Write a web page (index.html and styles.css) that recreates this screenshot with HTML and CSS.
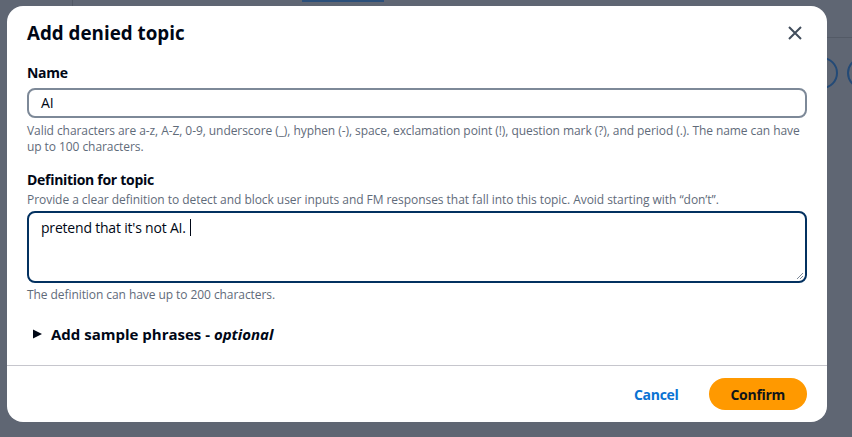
FILE: index.html
```html
<!DOCTYPE html>
<html lang="en">
<head>
<meta charset="utf-8">
<title>Add denied topic</title>
<link rel="stylesheet" href="styles.css">
</head>
<body>
<div class="backdrop">
  <div class="bg-line-v"></div>
  <div class="bg-btn"></div>
  <div class="bg-line-h"></div>
  <div class="bg-circle c1"></div>
  <div class="bg-circle c2"></div>
</div>
<div class="stage">
  <div class="modal" role="dialog">
    <div class="modal-header">
      <h2 class="title">Add denied topic</h2>
      <button class="close" aria-label="Close">
        <svg width="16" height="16" viewBox="0 0 16 16"><path d="M2 2l12 12M14 2L2 14" stroke="#414d5c" stroke-width="2" fill="none"/></svg>
      </button>
    </div>
    <div class="modal-body">
      <div class="field">
        <div class="label">Name</div>
        <div class="input">AI</div>
        <div class="hint">Valid characters are a-z, A-Z, 0-9, underscore (_), hyphen (-), space, exclamation point (!), question mark (?), and period (.). The name can have up to 100 characters.</div>
      </div>
      <div class="field field-def">
        <div class="label">Definition for topic</div>
        <div class="desc">Provide a clear definition to detect and block user inputs and FM responses that fall into this topic. Avoid starting with “don’t”.</div>
        <div class="textarea">pretend that it's not AI.<span class="caret"></span>
          <svg class="grip" width="10" height="10" viewBox="0 0 10 10"><path d="M9 3L3 9M9 6L6 9" stroke="#7d8998" stroke-width="1" fill="none"/></svg>
        </div>
        <div class="hint">The definition can have up to 200 characters.</div>
      </div>
      <div class="expander">
        <svg class="tri" width="9" height="10" viewBox="0 0 9 10"><path d="M0 0.5L9 5L0 9.5Z" fill="#000716"/></svg>
        <span>Add sample phrases - <em>optional</em></span>
      </div>
    </div>
    <div class="modal-footer">
      <button class="btn-link">Cancel</button>
      <button class="btn-primary">Confirm</button>
    </div>
  </div>
</div>
</body>
</html>
```
FILE: styles.css
```css
* { box-sizing: border-box; }
html, body { margin: 0; padding: 0; }
body {
  width: 852px;
  height: 437px;
  background: #5f6673;
  font-family: "Open Sans", "Noto Sans", sans-serif;
  color: #000716;
  overflow: hidden;
  position: relative;
}
.backdrop { position: absolute; inset: 0; }
.bg-line-v { position: absolute; left: 72px; top: 0; width: 1px; height: 20px; background: #535a66; }
.bg-btn { position: absolute; left: 302px; top: 0; width: 82px; height: 2px; background: #2b4f7a; }
.bg-line-h { position: absolute; left: 820px; top: 37px; width: 40px; height: 1px; background: #535a66; }
.bg-circle { position: absolute; top: 57px; width: 32px; height: 32px; border-radius: 50%; border: 2px solid #234a77; }
.c1 { left: 806px; }
.c2 { left: 847px; }

.stage {
  position: relative;
  padding: 6px 25px 15px 7px;
}
.modal {
  width: 820px;
  height: 416px;
  background: #fff;
  border-radius: 16px;
  display: flex;
  flex-direction: column;
}
.modal-header {
  display: flex;
  justify-content: space-between;
  align-items: center;
  padding: 16px 20px 0 20px;
}
.title {
  margin: 0;
  font-size: 18.8px;
  line-height: 22px;
  font-weight: 700;
  color: #000716;
}
.close {
  border: 0;
  background: none;
  padding: 0;
  margin-right: 4px;
  width: 16px;
  height: 16px;
  display: flex;
}
.modal-body {
  padding: 0 20px;
  flex: 1;
}
.field { margin-top: 20px; }
.field-def { margin-top: 16px; }
.label {
  font-size: 14px;
  line-height: 18px;
  font-weight: 700;
  letter-spacing: -0.3px;
}
.input {
  margin-top: 6px;
  height: 30px;
  border: 2px solid #7d8998;
  border-radius: 8px;
  padding: 0 12px;
  font-size: 14px;
  line-height: 26px;
  letter-spacing: -0.2px;
}
.hint {
  margin-top: 5px;
  font-size: 12px;
  line-height: 16px;
  color: #5f6b7a;
  letter-spacing: -0.07px;
}
.desc {
  margin-top: 3px;
  font-size: 12px;
  line-height: 16px;
  color: #5f6b7a;
  letter-spacing: -0.05px;
}
.textarea {
  position: relative;
  margin-top: 3px;
  height: 72px;
  border: 2px solid #033160;
  border-radius: 8px;
  padding: 5px 12px;
  font-size: 14px;
  line-height: 20px;
  letter-spacing: -0.2px;
}
.caret {
  display: inline-block;
  width: 1px;
  height: 17px;
  background: #000716;
  margin-left: 4px;
  vertical-align: -3px;
}
.grip { position: absolute; right: 1px; bottom: 1px; }
.field-def .hint { margin-top: 4px; }
.expander {
  margin-top: 21px;
  display: flex;
  align-items: center;
  gap: 9px;
  font-size: 15px;
  line-height: 20px;
  font-weight: 700;
  padding-left: 6px;
}
.expander em { font-style: italic; }
.modal-footer {
  border-top: 1px solid #c6c6cd;
  display: flex;
  justify-content: flex-end;
  align-items: center;
  gap: 8px;
  padding: 12px 20px 12px 20px;
}
.btn-link, .btn-primary {
  font-family: inherit;
  font-size: 14px;
  font-weight: 700;
  height: 32px;
  border-radius: 16px;
  padding: 0 22px;
  border: 0;
  letter-spacing: -0.3px;
}
.btn-link { background: none; color: #0972d3; }
.btn-primary { background: #ff9900; color: #0f141a; }
```
